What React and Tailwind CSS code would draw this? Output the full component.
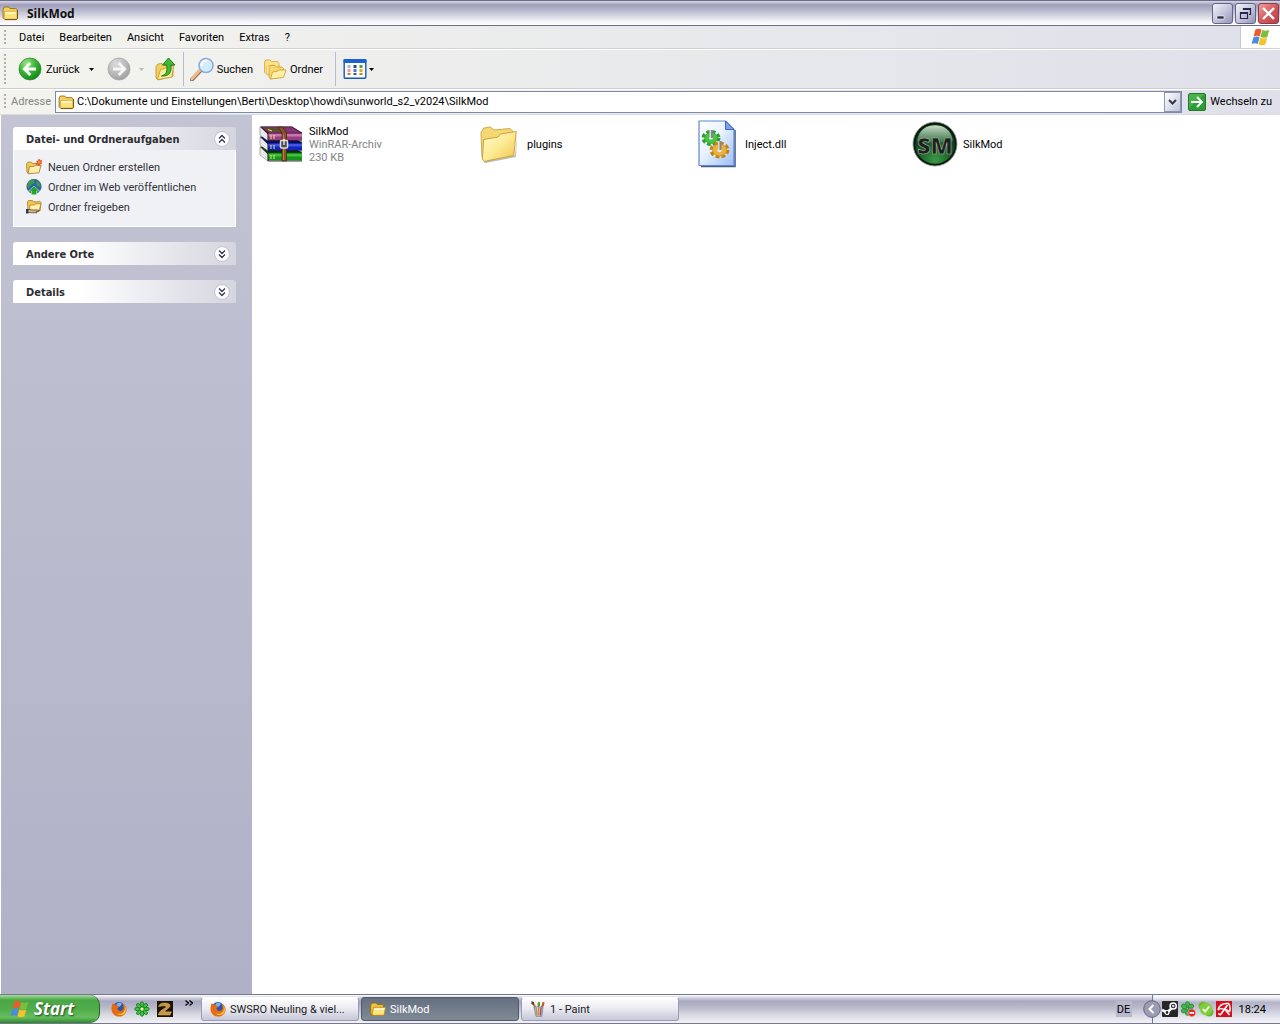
import React, { useState } from 'react'
import clsx from 'clsx'

/* ---------- icons ---------- */

const FolderIcon = ({ className = 'w-4 h-4' }) => (
  <svg viewBox="0 0 16 16" className={className} aria-hidden="true">
    <path d="M.6 4.200 1.800 2h4.400l1.300 1.600h5.800l1.600 1.400v8.200L13.800 14.500H2.200L.6 12.800z" fill="#f3d160" stroke="#9a6a12" strokeWidth=".9" />
    <path d="M2.200 6.300h11.600l.6 1v6l-1 .8H3L1.800 13z" fill="#fce27a" stroke="#c9982f" strokeWidth=".6" />
    <path d="M2.800 7h10.500v2H2.800z" fill="#fff6bf" />
    <path d="M15 5v8.400L13.800 14.600H2.500" fill="none" stroke="#6b4a10" strokeWidth=".8" />
  </svg>
)

const OpenFolderIcon = () => (
  <svg viewBox="0 0 16 16" className="w-4 h-4" aria-hidden="true">
    <path d="M.7 4.200 1.800 2h4.400l1.300 1.600h5l1 1.200v8.400L13 14.400H2.200L.7 12.800z" fill="#f0c43c" stroke="#9a6a12" strokeWidth=".9" />
    <path d="M3.600 6.300h11.600l.2 1-1.200 6.200-1 .8H3.400L2.200 13z" fill="#fde67c" stroke="#b9861e" strokeWidth=".8" />
    <path d="M4.300 7.200h10l-.3 1.800H4z" fill="#fff8c8" />
  </svg>
)

const BigFolderIcon = () => (
  <svg viewBox="0 0 40 40" className="w-10 h-10" aria-hidden="true">
    <defs>
      <linearGradient id="bigFolder" x1="0" y1="0" x2="1" y2="1">
        <stop offset="0" stopColor="#fffbd0" />
        <stop offset=".5" stopColor="#fdea94" />
        <stop offset="1" stopColor="#efc443" />
      </linearGradient>
    </defs>
    <path d="M5 37.500 36 31.500 38 12 37 33 6 39z" fill="#777" opacity=".5" />
    <path d="M2 8.500 5 4 11.500 3 15 6 31 4.500 33.500 7v5L5 35.500 3 33z" fill="#f6d872" stroke="#c9a23c" strokeWidth=".9" />
    <path d="M4.600 15.500 19 13 21.500 10 37.200 7.500 34.800 31.500 5 37.500 3.400 35z" fill="url(#bigFolder)" stroke="#c39a35" strokeWidth=".9" />
  </svg>
)

const BackIcon = () => (
  <svg viewBox="0 0 24 24" className="w-6 h-6" aria-hidden="true">
    <defs>
      <radialGradient id="back" cx=".35" cy=".25" r=".8">
        <stop offset="0" stopColor="#9be888" />
        <stop offset=".5" stopColor="#3cb535" />
        <stop offset="1" stopColor="#12831a" />
      </radialGradient>
    </defs>
    <circle cx="12" cy="12" r="11" fill="url(#back)" stroke="#2b8a2b" strokeWidth=".7" />
    <path d="M12.300 6 6.300 12l6 6M6.800 12H18" fill="none" stroke="#fff" strokeWidth="2.800" />
  </svg>
)

const ForwardIcon = () => (
  <svg viewBox="0 0 24 24" className="w-6 h-6" aria-hidden="true">
    <defs>
      <radialGradient id="forward" cx=".35" cy=".25" r=".8">
        <stop offset="0" stopColor="#dcdcdc" />
        <stop offset=".6" stopColor="#b8b8b8" />
        <stop offset="1" stopColor="#9e9e9e" />
      </radialGradient>
    </defs>
    <circle cx="12" cy="12" r="11" fill="url(#forward)" stroke="#a2a2a2" strokeWidth=".7" />
    <path d="m11.700 6 6 6-6 6m5.500-6H6" fill="none" stroke="#f6f6f6" strokeWidth="2.800" />
  </svg>
)

const UpIcon = () => (
  <svg viewBox="0 0 24 24" className="w-6 h-6" aria-hidden="true">
    <path d="M3 9.500 5 7l4-.6 1.600 1.800 8-1.200 1.400 2v10L5 23l-2-2z" fill="#f3cf62" stroke="#c79a2c" strokeWidth=".9" />
    <path d="m4.500 22.600 3-10.200 4.500-.8 1.600-2 7-1-1.800 11.600z" fill="#fdee9c" stroke="#c79a2c" strokeWidth=".9" />
    <path d="M8.500 19c5-1.500 5.800-4.500 5.300-11H9.500L15.500 1l6.500 7h-4c.8 7-1.500 11.500-9.500 11z" fill="#3fb933" stroke="#15721a" strokeWidth=".9" />
  </svg>
)

const SearchIcon = () => (
  <svg viewBox="0 0 24 24" className="w-6 h-6" aria-hidden="true">
    <path d="m2 22.500 8-8.500" stroke="#8a5a32" strokeWidth="4" strokeLinecap="round" />
    <path d="m1.800 22 8-8.500" stroke="#f0bd92" strokeWidth="2.800" strokeLinecap="round" />
    <circle cx="16" cy="8.500" r="7" fill="#d3ecfb" stroke="#8aa9da" strokeWidth="1.500" />
    <path d="M11.500 8a5 5 0 0 1 5-4.500" fill="none" stroke="#fff" strokeWidth="2" strokeLinecap="round" />
  </svg>
)

const FoldersIcon = () => (
  <svg viewBox="0 0 24 24" className="w-6 h-6" aria-hidden="true">
    <path d="M1.500 5 3 3h4l1.500 1.500h6l1.500 2v8l-11 3-3.500-2z" fill="#fbe28a" stroke="#dfae3c" strokeWidth=".9" />
    <path d="M3 9.500 10 8l-2 9-4 1z" fill="#fdf3bd" stroke="#dfae3c" strokeWidth=".7" />
    <path d="M6 10.500 7.500 8.500h4.500L13.500 10H19l1.500 1.500v8L7.500 22 6 20z" fill="#f7d772" stroke="#d2a136" strokeWidth=".9" />
    <path d="m7.500 22 2-7 5-.8 1.500-1.200h7l-2.500 7.500z" fill="#fdf0a6" stroke="#d2a136" strokeWidth=".9" />
  </svg>
)

const ViewsIcon = () => (
  <svg viewBox="0 0 23 20" className="w-6 h-5" aria-hidden="true">
    <rect x=".7" y=".7" width="21.600" height="18.600" rx="1" fill="#fdfdf6" stroke="#1459c2" strokeWidth="1.400" />
    <rect x="0" y="0" width="23" height="4" rx="1" fill="#1b62d0" />
    <path d="M4 6h3v3H4z" fill="#a9b3d8" />
    <path d="M4 10h3v3H4z" fill="#ec9d8c" />
    <path d="M10 6h3v3h-3z" fill="#264b94" />
    <path d="M10 10h3v3h-3z" fill="#4a76d6" />
    <path d="M16 6h3v3h-3z" fill="#4ca146" />
    <path d="M16 10h3v3h-3z" fill="#dba944" />
    <path d="M4 14h3v2H4z" fill="#d66f5c" />
    <path d="M10 14h3v2h-3z" fill="#2c55b0" />
    <path d="M16 14h3v2h-3z" fill="#c08a2c" />
  </svg>
)

const WindowsFlag = ({ className }) => (
  <svg viewBox="0 0 20 18" className={className} aria-hidden="true">
    <path d="M4.300 1.800C6.500.3 8.500.4 10.500 1.500L8.800 8.400C6.800 7.400 4.700 7.500 2.600 8.600z" fill="#ee5a2b" />
    <path d="M11.200 2c2.300 1.100 4.500 1.100 7 0l-1.800 6.900c-2.300 1.100-4.600 1-6.900-.1z" fill="#7dbd3b" />
    <path d="M2.400 9.400c2-1.100 4.100-1.200 6.100-.2l-1.700 6.700c-2-1-4-.9-6.200.2z" fill="#4a8ae0" />
    <path d="M9.300 9.600c2.300 1.100 4.600 1.200 6.900.1l-1.800 6.800c-2.400 1.100-4.600 1.100-6.900 0z" fill="#f6c32d" />
  </svg>
)

const GoIcon = () => (
  <svg viewBox="0 0 18 18" className="w-[18px] h-[18px]" aria-hidden="true">
    <rect x=".5" y=".5" width="17" height="17" rx="1.500" fill="#2f9d35" stroke="#1e7a2a" />
    <path d="M1 1h16L1 15z" fill="#5cbd58" opacity=".6" />
    <path d="m9 4 5 5-5 5m4.500-5H3" fill="none" stroke="#fff" strokeWidth="1.800" />
  </svg>
)

const NewFolderIcon = () => (
  <svg viewBox="0 0 16 16" className="w-4 h-4" aria-hidden="true">
    <path d="M.6 5 1.800 3.200h3.700l1 1.300h6l.8 1.500v6L2.500 14.500 1 13z" fill="#f3ca52" stroke="#a87520" strokeWidth=".8" />
    <path d="M3.500 7.500h4.500l1-1.200h6l-2 7.500-11 1z" fill="#fdf0ae" stroke="#a87520" strokeWidth=".8" />
    <path d="m13 0 .8 2 2-.8-.8 2 1 1.300-2 .3-.6 2-1.200-1.800-2.200.3 1.300-1.600L10.700 2l1.800.2z" fill="#e8502a" stroke="#e8502a" strokeWidth=".8" />
    <circle cx="13.200" cy="3.300" r="1.300" fill="#f7903c" />
  </svg>
)

const PublishIcon = () => (
  <svg viewBox="0 0 16 16" className="w-4 h-4" aria-hidden="true">
    <circle cx="8" cy="7.500" r="7.200" fill="#2a63b4" stroke="#1c4274" strokeWidth=".6" />
    <path d="M2 4c2-3 5-3.500 7-3l-1 3-3 2-3 3-1-1.500zM11 2c2 1 4 3.500 3.800 6L12 7.500 10 5z" fill="#3f9c46" />
    <path d="M8 7 2.500 12h3v3.700h5V12h3z" fill="#27a52b" stroke="#d8f5cf" strokeWidth=".5" />
  </svg>
)

const ShareIcon = () => (
  <svg viewBox="0 0 16 16" className="w-4 h-4" aria-hidden="true">
    <path d="M1.500 3 2.500 1.500h4l1 1.300h5l1-.8 1.500 1.500L14 12H2z" fill="#f0c753" stroke="#a87520" strokeWidth=".8" />
    <path d="M4 6h4.500l1-1.200H15L13 12H3z" fill="#fdf0ae" stroke="#a87520" strokeWidth=".7" />
    <path d="M0 10.500h3l4 .5h5.500l.5 1-3 .8 1 1H6L3.500 13.500H0z" fill="#e0b78c" stroke="#4d3420" strokeWidth=".7" />
    <path d="M0 10h2.500v4.500H0z" fill="#2b3a5c" />
  </svg>
)

const books = [
  { y: 23, main: '#14961c', light: '#43bf3e', dark: '#083c0c' },
  { y: 13, main: '#1524c0', light: '#4157e0', dark: '#060e5c' },
  { y: 3, main: '#98407f', light: '#c774b0', dark: '#3d1036' },
]

const RarIcon = () => (
  <svg viewBox="0 0 44 36" className="w-11 h-9" aria-hidden="true">
    {books.map((book) => (
      <g key={book.y} transform={`translate(0 ${book.y})`}>
        <path d="M1-2 9 5v7L1 6z" fill="#f6f6f6" stroke="#555" strokeWidth=".5" />
        <path d="M1.500 1 9 7.500M1.500 3.500 9 10" stroke="#b0b0b0" strokeWidth=".5" />
        <path d="M1-2.500h32L43 3.500v2H9z" fill={book.dark} />
        <path d="M9 4h34v7.500H9z" fill={book.main} />
        <path d="M9 5h34v2.500H9z" fill={book.light} />
        <path d="M9 4v8h34" fill="none" stroke="#111" strokeWidth=".8" />
        <path d="M12 6v4M15 6v4" stroke="#f0df74" strokeWidth="1" />
      </g>
    ))}
    <path d="M2 1h31l9.500 6H10z" fill="#84346e" stroke="#4b1d3e" strokeWidth=".6" />
    <path d="M4 1.500h14L23 6H11z" fill="#55551c" opacity=".8" />
    <path d="M9 3.500 13 5" stroke="#f0df74" strokeWidth="1" />
    <path d="M19 1h4.500l4 6V35H23V7z" fill="#8b5426" stroke="#3d220c" strokeWidth=".7" />
    <path d="M24.500 8v26" stroke="#b98048" strokeWidth="1" />
    <rect x="21.500" y="14.500" width="7" height="7.500" rx="1" fill="#4b4b4b" stroke="#dcdcdc" strokeWidth="1.500" />
    <path d="M25 13v6" stroke="#f5f5f5" strokeWidth="1.300" />
  </svg>
)

const DllIcon = () => (
  <svg viewBox="0 0 38 48" className="w-[38px] h-12" aria-hidden="true">
    <defs>
      <linearGradient id="page" x1="0" y1="0" x2="1" y2="1">
        <stop offset="0" stopColor="#fff" />
        <stop offset=".45" stopColor="#e8f1fe" />
        <stop offset="1" stopColor="#9cbdf2" />
      </linearGradient>
    </defs>
    <path d="M3 46.500h34V10" fill="none" stroke="#4c5c80" strokeWidth="1.600" />
    <path d="M1 1h26.500L36 9.500v36H1z" fill="url(#page)" stroke="#5b87d6" strokeWidth="1.200" />
    <path d="M27.500 1v8.500H36z" fill="#7aa5ec" stroke="#3868c0" strokeWidth="1" />
    <ellipse cx="13" cy="18" rx="7.500" ry="6" fill="none" stroke="#2c9c2e" strokeWidth="4" strokeDasharray="3.400 2" />
    <ellipse cx="13" cy="18" rx="6.500" ry="5.500" fill="#4ac33f" stroke="#2c9c2e" strokeWidth=".6" />
    <ellipse cx="13" cy="18" rx="2" ry="1.600" fill="#e8f1fe" />
    <ellipse cx="21.500" cy="30" rx="8" ry="6.500" fill="none" stroke="#c28416" strokeWidth="4" strokeDasharray="3.600 2.100" />
    <ellipse cx="21.500" cy="30" rx="7" ry="6" fill="#eeb239" stroke="#c28416" strokeWidth=".6" />
    <ellipse cx="21.500" cy="30.500" rx="2.200" ry="1.700" fill="#dce9fd" />
    <path d="M11.500 10h3.500v8h-3.500zM20 21h3.500v9H20z" fill="#85858f" />
    <path d="M11.500 10H13v8h-1.500zM20 21h1.500v9H20z" fill="#d9d9e2" />
  </svg>
)

const SilkModIcon = () => (
  <svg viewBox="0 0 46 46" className="w-[46px] h-[46px]" aria-hidden="true">
    <defs>
      <radialGradient id="orb" cx=".5" cy=".9" r=".75">
        <stop offset="0" stopColor="#3b9a45" />
        <stop offset=".5" stopColor="#1c6328" />
        <stop offset="1" stopColor="#0d3315" />
      </radialGradient>
      <linearGradient id="gloss" x1="0" y1="0" x2="0" y2="1">
        <stop offset="0" stopColor="#dcefdd" />
        <stop offset="1" stopColor="#3f7549" />
      </linearGradient>
    </defs>
    <circle cx="23" cy="23" r="22" fill="#0b1a0e" stroke="#8e9a90" strokeWidth=".8" />
    <circle cx="23" cy="23" r="19.800" fill="url(#orb)" />
    <path d="M5 20C7 8 15 4.200 23 4.200S39 8 41 20c-5 2-31 2-36 0z" fill="url(#gloss)" opacity=".9" />
    <text x="23" y="33" textAnchor="middle" fontFamily="Open Sans, sans-serif" fontWeight="800" fontSize="23" fill="#1b201c" stroke="#a5b8a8" strokeWidth=".6">SM</text>
  </svg>
)

const FirefoxIcon = () => (
  <svg viewBox="0 0 16 16" className="w-4 h-4" aria-hidden="true">
    <circle cx="8" cy="7.500" r="6.500" fill="#2b56a8" />
    <path d="M5.500 3c1.500-1.500 4-1.500 5.500-.3L9 5.500 6 6z" fill="#74b5ec" />
    <path d="M1.800 2.200 3.500 3.500l2.700.3c.3 1 .8 1.500 1.800 2l-1.500 1.500c0 1.700 1.500 3 3.300 2.700 2-.3 3.200-2 2.700-4.500-.2-1.300-.8-2.200-1.500-3C14 3.500 15.800 6 15.600 8.700 15.300 12.800 12 15.700 8 15.600 3.700 15.500.5 12.200.5 8c0-2.200.4-4.200 1.300-5.800z" fill="#e66b16" />
    <path d="M13 4.500c1 2 1.200 4 0 6-1.500 2.300-4.500 3-7 1.700 1.700 2.500 6 2.500 8-.2 1.600-2.200 1.200-5.700-1-7.500z" fill="#fbbf34" />
  </svg>
)

const CloverIcon = () => (
  <svg viewBox="0 0 16 16" className="w-4 h-4" aria-hidden="true">
    {[0, 45, 90, 135, 180, 225, 270, 315].map((angle) => (
      <ellipse key={angle} cx="8" cy="3.500" rx="1.700" ry="2.800" fill="#3cc440" stroke="#0f6a18" strokeWidth=".7" transform={`rotate(${angle} 8 8)`} />
    ))}
    <circle cx="8" cy="8" r="1.500" fill="#f2f4a8" />
  </svg>
)

const TwoIcon = () => (
  <svg viewBox="0 0 16 16" className="w-4 h-4" aria-hidden="true">
    <path d="M0 0h16v16H0z" fill="#1c1206" />
    <path d="M1.500 5.500C2.500 2 6.500 1.500 10 2.200s4 3.300 1.300 5L7 10.800h7.500L13 14H1.500c0-2.500 2-4.500 7-7.200 1-.8.8-1.800-.5-1.900C6 4.700 4 5.500 1.500 5.500z" fill="#c8963a" stroke="#f0d490" strokeWidth=".4" />
  </svg>
)

const PaintIcon = () => (
  <svg viewBox="0 0 16 16" className="w-4 h-4" aria-hidden="true">
    <path d="m6 8-3.500-7M8.500 8V2M11 8l2.500-6" stroke="#b5702a" strokeWidth="1.800" />
    <path d="M1.500 0 4 1.500 3.500 4 1.500 3z" fill="#4d3322" />
    <path d="M8 1h2v4H8z" fill="#5a9e36" />
    <path d="m12.500 1 2 .6-.8 4-1.700-.6z" fill="#d54a2a" />
    <path d="M4 6h9l-1.200 9.300H6z" fill="#bcd2e4" stroke="#5b7590" strokeWidth=".7" />
    <path d="m6 6.500.8 8M8.500 7v7.500" stroke="#d88a3c" strokeWidth="1.400" />
    <path d="m11 6.500-.6 8" stroke="#b8443a" strokeWidth="1.400" />
  </svg>
)

const SteamIcon = () => (
  <svg viewBox="0 0 16 16" className="w-4 h-4" aria-hidden="true">
    <rect width="16" height="16" rx="1" fill="#262626" />
    <path d="m0 9 5 2.500L10 7" fill="none" stroke="#fff" strokeWidth="2.600" />
    <circle cx="11.200" cy="5" r="3.100" fill="#262626" stroke="#fff" strokeWidth="1.500" />
    <circle cx="11.200" cy="5" r="1.300" fill="#ddd" />
    <circle cx="5" cy="11.500" r="2" fill="#262626" stroke="#fff" strokeWidth="1.200" />
  </svg>
)

const CloverBlockedIcon = () => (
  <svg viewBox="0 0 16 16" className="w-4 h-4" aria-hidden="true">
    {[0, 60, 120, 180, 240, 300].map((angle) => (
      <ellipse key={angle} cx="7.500" cy="3.600" rx="2.300" ry="3" fill="#46b44e" stroke="#1c7a2b" strokeWidth=".6" transform={`rotate(${angle} 7.500 7.500)`} />
    ))}
    <circle cx="11.800" cy="11.800" r="3.900" fill="#dc2a22" stroke="#fff" strokeWidth=".4" />
    <path d="M9.500 11h4.600v1.700H9.500z" fill="#fff" />
  </svg>
)

const SkypeIcon = () => (
  <svg viewBox="0 0 16 16" className="w-4 h-4" aria-hidden="true">
    <circle cx="4.800" cy="4.800" r="4.300" fill="#6cbb2c" />
    <circle cx="11.200" cy="11.200" r="4.300" fill="#6cbb2c" />
    <circle cx="8" cy="8" r="6.300" fill="#84ce3e" />
    <path d="m4.800 8 2.300 2.500 4.200-5" fill="none" stroke="#fff" strokeWidth="1.800" />
  </svg>
)

const AviraIcon = () => (
  <svg viewBox="0 0 16 16" className="w-4 h-4" aria-hidden="true">
    <path d="M0 0h16v16H0z" fill="#d3101c" />
    <path d="M2 9C3 4.500 7 2 12.500 2.500 14.500 5 14.500 8 13.500 11" fill="none" stroke="#fff" strokeWidth="1.500" />
    <path d="M2 9c2-1.500 4-2 6-.5 2-.5 4 .5 5.500 2.500" fill="none" stroke="#fff" strokeWidth="1.300" />
    <path d="M11.500 4 5 13c-.8 1-2.300.700-2.300-.7M9.500 9l4 5" fill="none" stroke="#fff" strokeWidth="1.600" />
  </svg>
)

/* ---------- small parts ---------- */

const Grip = () => (
  <span className="w-0.5 self-stretch my-1 bg-[repeating-linear-gradient(to_bottom,#b0afa8_0_2px,transparent_2px_4px)]" />
)

const Caret = ({ disabled }) => (
  <svg viewBox="0 0 5 3" className="w-[5px] h-[3px]" aria-hidden="true">
    <path d="M0 0h5L2.500 3z" fill={disabled ? '#b9b9b9' : '#000'} />
  </svg>
)

const Label = ({ children }) => <span className="pt-0.5 truncate">{children}</span>

const captionButtons = [
  {
    label: 'Minimieren',
    icon: <path d="M5 13h7v3H5z" fill="#2a2a4a" stroke="#fff" strokeWidth=".6" />,
    color: 'from-[#f4f4fa] via-[#c6c7dc] to-[#9394b4] border-[#63648a]',
  },
  {
    label: 'Wiederherstellen',
    icon: <path d="M5.500 9.500h7v6h-7zM5 10.500h8M8.500 7V5.500h7v6H14M8 6.500h8" fill="none" stroke="#26264a" strokeWidth="1.200" />,
    color: 'from-[#f4f4fa] via-[#c6c7dc] to-[#9394b4] border-[#63648a]',
  },
  {
    label: 'Schließen',
    icon: <path d="m5 5 11 11M16 5 5 16" stroke="#fff" strokeWidth="2.400" />,
    color: 'from-[#f0a0a0] via-[#d55a5c] to-[#b83f45] border-[#8c3a48]',
  },
]

const TitleBar = () => (
  <header className="h-[26px] flex items-center gap-2 pl-0.5 pr-px border-y border-[#6d6d8b] bg-[linear-gradient(to_bottom,#d8d8e4_0%,#a09fbc_16%,#b4b4ca_35%,#d3d4e0_60%,#f4f4f8_85%,#fff_100%)]">
    <FolderIcon className="w-[17px] h-4" />
    <h1 className="flex-1 pt-0.5 font-['Open_Sans',sans-serif] text-xs font-bold text-[#111]">SilkMod</h1>
    <div className="flex gap-0.5">
      {captionButtons.map((button) => (
        <button
          key={button.label}
          type="button"
          aria-label={button.label}
          className={clsx('w-[21px] h-[21px] rounded-[3px] border bg-linear-to-br', button.color)}
        >
          <svg viewBox="1 1 19 19" className="w-[19px] h-[19px]" aria-hidden="true">{button.icon}</svg>
        </button>
      ))}
    </div>
  </header>
)

const menuItems = ['Datei', 'Bearbeiten', 'Ansicht', 'Favoriten', 'Extras', '?']

const MenuBar = () => (
  <nav className="h-[23px] flex items-center pl-1 border-b border-[#d2d2ce]">
    <Grip />
    <div className="flex-1 flex gap-[15px] pl-[13px] pt-0.5">
      {menuItems.map((item) => (
        <button key={item} type="button">{item}</button>
      ))}
    </div>
    <div className="w-10 h-full flex items-center justify-center bg-white border-l border-[#c8c8d0]">
      <WindowsFlag className="w-5 h-[18px]" />
    </div>
  </nav>
)

const ToolBar = () => (
  <div className="h-10 flex items-center pl-1 border-t border-white border-b border-b-[#cdcdcb]">
    <Grip />
    <button type="button" className="flex items-center gap-1 ml-3">
      <BackIcon />
      <Label>Zurück</Label>
    </button>
    <button type="button" aria-label="Zurück-Verlauf" className="px-[9px] h-6 flex items-center"><Caret /></button>
    <button type="button" aria-label="Vorwärts" className="ml-1"><ForwardIcon /></button>
    <button type="button" aria-label="Vorwärts-Verlauf" className="pl-2 pr-[9px] h-6 flex items-center"><Caret disabled /></button>
    <button type="button" aria-label="Aufwärts"><UpIcon /></button>
    <span className="w-px self-stretch my-0.5 ml-[6px] mr-[6px] bg-[#b9bccb]" />
    <button type="button" className="flex items-center gap-[3px]">
      <SearchIcon />
      <Label>Suchen</Label>
    </button>
    <button type="button" className="flex items-center gap-[3px] ml-[10px]">
      <FoldersIcon />
      <Label>Ordner</Label>
    </button>
    <span className="w-px self-stretch my-0.5 ml-3 mr-[7px] bg-[#b9bccb]" />
    <button type="button" aria-label="Ansichten" className="flex items-center gap-0.5">
      <ViewsIcon />
      <Caret />
    </button>
  </div>
)

const AddressBar = () => {
  const [path, setPath] = useState('C:\\Dokumente und Einstellungen\\Berti\\Desktop\\howdi\\sunworld_s2_v2024\\SilkMod')

  return (
    <form className="h-[26px] flex items-center pl-1 border-t border-white border-b border-b-[#dcdce0]" onSubmit={(e) => e.preventDefault()}>
      <Grip />
      <label htmlFor="address" className="w-[49px] pl-[5px] text-[#848484]">Adresse</label>
      <div className="flex-1 h-[22px] flex items-center border border-[#7b8ba8] bg-white pl-0.5">
        <FolderIcon className="w-[17px] h-4" />
        <input
          id="address"
          type="text"
          value={path}
          onChange={(e) => setPath(e.target.value)}
          className="flex-1 min-w-0 pl-[2px] bg-transparent outline-none"
        />
        <button
          type="button"
          aria-label="Adressliste"
          className="w-[17px] h-5 flex items-center justify-center border border-[#8c94b4] bg-linear-to-br from-white to-[#c3c5d9]"
        >
          <svg viewBox="0 0 9 6" className="w-[9px] h-1.5" aria-hidden="true">
            <path d="m1 1 3.500 3.500L8 1" fill="none" stroke="#33364a" strokeWidth="2" />
          </svg>
        </button>
      </div>
      <button type="submit" className="flex items-center gap-1 px-2 pl-[6px]">
        <GoIcon />
        Wechseln zu
      </button>
    </form>
  )
}

/* ---------- side panels ---------- */

const tasks = [
  { label: 'Neuen Ordner erstellen', icon: <NewFolderIcon /> },
  { label: 'Ordner im Web veröffentlichen', icon: <PublishIcon /> },
  { label: 'Ordner freigeben', icon: <ShareIcon /> },
]

const TaskPanel = ({ title, defaultOpen = false, children }) => {
  const [open, setOpen] = useState(defaultOpen)

  return (
    <section>
      <button
        type="button"
        aria-expanded={open}
        onClick={() => setOpen(!open)}
        className="w-full h-[23px] flex items-center justify-between pl-[13px] pr-[6px] rounded-t-[3px] bg-linear-to-r from-white from-30% to-[#d4d5df]"
      >
        <span className="pt-1 text-[11px] font-bold font-['DejaVu_Sans_Condensed','DejaVu_Sans',sans-serif] text-[#2d2d33]">{title}</span>
        <svg viewBox="0 0 16 16" className={clsx('w-4 h-4', open && 'rotate-180')} aria-hidden="true">
          <circle cx="8" cy="8" r="7.400" fill="#fff" stroke="#b5b6c8" strokeWidth=".8" />
          <path d="m5 4.500 3 3 3-3M5 8.500l3 3 3-3" fill="none" stroke="#34354c" strokeWidth="1.300" />
        </svg>
      </button>
      {open && children}
    </section>
  )
}

const SidePanel = () => (
  <aside className="w-[252px] flex flex-col gap-[15px] pt-3 pl-3 pr-4 border-l border-white bg-linear-to-b from-[#c2c4d3] to-[#b0b1c7]">
    <TaskPanel title="Datei- und Ordneraufgaben" defaultOpen>
      <ul className="h-[77px] pt-[7px] pl-3 border border-t-0 border-white bg-[#f0f1f5]">
        {tasks.map((task) => (
          <li key={task.label}>
            <a href="#" className="h-5 flex items-center gap-[6px] text-[#33333a]">
              {task.icon}
              <Label>{task.label}</Label>
            </a>
          </li>
        ))}
      </ul>
    </TaskPanel>
    <TaskPanel title="Andere Orte" />
    <TaskPanel title="Details" />
  </aside>
)

/* ---------- files ---------- */

const files = [
  { id: 1, name: 'SilkMod', details: ['WinRAR-Archiv', '230 KB'], icon: <RarIcon /> },
  { id: 2, name: 'plugins', details: [], icon: <BigFolderIcon /> },
  { id: 3, name: 'Inject.dll', details: [], icon: <DllIcon /> },
  { id: 4, name: 'SilkMod', details: [], icon: <SilkModIcon /> },
]

const FileList = () => (
  <main className="flex-1 bg-white pt-1 pl-[5px]">
    <ul className="grid grid-cols-[repeat(auto-fill,218px)]">
      {files.map((file) => (
        <li key={file.id} className="h-[50px] flex items-center gap-1">
          <span className="w-12 flex justify-center">{file.icon}</span>
          <span className="leading-[13px]">
            {file.name}
            {file.details.map((detail) => (
              <span key={detail} className="block text-[#848484]">{detail}</span>
            ))}
          </span>
        </li>
      ))}
    </ul>
  </main>
)

/* ---------- task bar ---------- */

const windows = [
  { title: 'SWSRO Neuling & viel...', icon: <FirefoxIcon /> },
  { title: 'SilkMod', icon: <OpenFolderIcon />, active: true },
  { title: '1 - Paint', icon: <PaintIcon /> },
]

const TaskBar = () => (
  <footer className="h-[30px] flex border-y border-[#77778f] bg-[linear-gradient(to_bottom,#fff_0%,#d9d9e4_8%,#a8a8c0_22%,#b9bacb_45%,#dcdde5_75%,#f2f2f6_100%)]">
    <button
      type="button"
      className="w-[100px] flex items-center gap-1 pl-[10px] rounded-r-[10px] border-r border-[#1e6a24] bg-[linear-gradient(to_bottom,#a5dd9c_0%,#4aa745_18%,#51ad4c_50%,#66bd5e_80%,#2f8530_100%)] text-white"
    >
      <WindowsFlag className="w-5 h-[18px]" />
      <span className="font-['Open_Sans',sans-serif] text-[17px] font-bold italic [text-shadow:1px_1px_2px_#1d4d1d]">Start</span>
    </button>
    <div className="flex items-center gap-[7px] pl-[11px] pr-2">
      <button type="button" aria-label="Firefox"><FirefoxIcon /></button>
      <button type="button" aria-label="ICQ"><CloverIcon /></button>
      <button type="button" aria-label="Spiel"><TwoIcon /></button>
      <button type="button" aria-label="Weitere" className="self-start pt-[5px] pl-[5px]">
        <svg viewBox="0 0 8 7" className="w-2 h-[7px]" aria-hidden="true">
          <path d="m.5.500 3 2.500-3 2.500M4.500.500l3 2.500-3 2.500" fill="none" stroke="#000" strokeWidth="1.300" />
        </svg>
      </button>
    </div>
    <div className="flex-1 flex items-center gap-0.5">
      {windows.map((item) => (
        <button
          key={item.title}
          type="button"
          className={clsx(
            'w-[158px] h-6 flex items-center gap-1 px-2 rounded-[3px] border',
            item.active
              ? 'border-[#535c6c] bg-linear-to-b from-[#65707e] to-[#7f8a97] text-white'
              : 'border-[#9c9cb4] border-t-white bg-linear-to-b from-white via-[#e9e9f0] to-[#c7c8d8] text-[#222]'
          )}
        >
          {item.icon}
          <Label>{item.title}</Label>
        </button>
      ))}
    </div>
    <span className="w-4 h-4 mr-5 self-center bg-[#b9b9cc] text-center leading-[18px]">DE</span>
    <div className="flex items-center pr-[14px] border-l border-[#77778f] bg-[linear-gradient(to_bottom,#fff_0%,#e9e9f0_12%,#b4b4ca_26%,#c6c6d5_50%,#e6e6ee_80%,#f4f4f8_100%)]">
      <button type="button" aria-label="Ausgeblendete Symbole" className="-ml-[10px] mr-px">
        <svg viewBox="0 0 18 18" className="w-[18px] h-[18px]" aria-hidden="true">
          <circle cx="9" cy="9" r="8.300" fill="#9c9db4" stroke="#5f6078" strokeWidth=".9" />
          <path d="M10.500 5 6.500 9l4 4" fill="none" stroke="#fff" strokeWidth="2" />
        </svg>
      </button>
      <span className="flex gap-0.5 mr-[7px]">
        <SteamIcon />
        <CloverBlockedIcon />
        <SkypeIcon />
        <AviraIcon />
      </span>
      <time className="pt-0.5">18:24</time>
    </div>
  </footer>
)

const App = () => (
  <div className="min-h-screen flex flex-col bg-white font-['Roboto',sans-serif] text-[11px] text-black">
    <TitleBar />
    <div className="bg-linear-to-r from-[#f4f4ee] to-[#dfe0ea]">
      <MenuBar />
      <ToolBar />
      <AddressBar />
    </div>
    <div className="flex-1 flex">
      <SidePanel />
      <FileList />
    </div>
    <TaskBar />
  </div>
)

export default App
